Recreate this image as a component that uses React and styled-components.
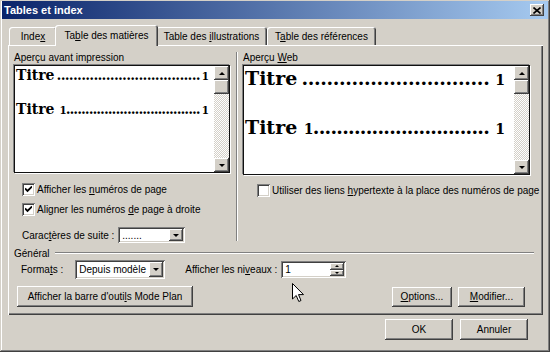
import React from 'react';
import styled, { createGlobalStyle } from 'styled-components';

const GlobalStyle = createGlobalStyle`
  html, body {
    margin: 0;
    padding: 0;
    background: #d4d0c8;
  }
  body {
    font-family: "Liberation Sans", Arial, sans-serif;
    font-size: 10px;
    color: #000;
  }
  * {
    box-sizing: border-box;
  }
`;

// classic 3D bevels
const raised = `
  background: #d4d0c8;
  box-shadow: inset -1px -1px #404040, inset 1px 1px #fff,
    inset -2px -2px #808080, inset 2px 2px #d4d0c8;
`;

const sunken = `
  background: #fff;
  box-shadow: inset 1px 1px #808080, inset -1px -1px #fff,
    inset 2px 2px #404040, inset -2px -2px #d4d0c8;
`;

const Window = styled.div`
  position: relative;
  width: 550px;
  height: 352px;
  padding: 1px 2px 2px 2px;
  background: #d4d0c8;
  box-shadow: inset -1px -1px #404040, inset 1px 1px #d4d0c8,
    inset -2px -2px #808080, inset 2px 2px #fff;
  display: flex;
  flex-direction: column;
  overflow: hidden;
`;

const TitleBar = styled.div`
  height: 18px;
  display: flex;
  align-items: center;
  justify-content: space-between;
  padding: 0 4px 0 2px;
  background: linear-gradient(to right, #0a246a, #a6caf0);
  color: #fff;
  font-weight: bold;
  font-size: 11px;
`;

const CloseButton = styled.div`
  ${raised}
  width: 14px;
  height: 12px;
  display: flex;
  align-items: center;
  justify-content: center;
`;

const Body = styled.div`
  flex: 1;
  display: flex;
  flex-direction: column;
  padding: 6px 5px 0 6px;
`;

const TabRow = styled.div`
  display: flex;
  align-items: flex-end;
  height: 20px;
  padding-left: 1px;
`;

const Tab = styled.div`
  position: relative;
  z-index: ${p => (p.$active ? 1 : 0)};
  width: ${p => p.$w}px;
  height: ${p => (p.$active ? 21 : 18)}px;
  margin: 0 ${p => (p.$active ? -2 : 0)}px ${p => (p.$active ? -1 : 0)}px;
  display: flex;
  align-items: center;
  justify-content: center;
  padding-top: ${p => (p.$active ? 0 : 1)}px;
  background: #d4d0c8;
  border-radius: 3px 3px 0 0;
  box-shadow: inset 1px 1px #fff, inset -1px 0 #404040, inset -2px 0 #808080;
  white-space: nowrap;
`;

const Panel = styled.div`
  height: 270px;
  padding: 7px 12px 0 6px;
  box-shadow: inset 1px 1px #fff, inset -1px -1px #404040, inset -2px -2px #808080;
  display: flex;
  flex-direction: column;
`;

const TopSection = styled.div`
  display: flex;
  height: 191px;
`;

const Column = styled.div`
  width: ${p => p.$w}px;
  display: flex;
  flex-direction: column;
`;

const Separator = styled.div`
  width: 2px;
  margin: 0 5px 2px 6px;
  border-left: 1px solid #808080;
  border-right: 1px solid #fff;
`;

const GroupLabel = styled.div`
  height: 12px;
  line-height: 12px;
  margin-bottom: 1px;
  white-space: nowrap;
`;

const PreviewFrame = styled.div`
  height: 110px;
  display: flex;
  background: #fff;
  border: 1px solid #111;
  box-shadow: -1px -1px 0 #808080, 1px 1px 0 #fff;
`;

const PreviewContent = styled.div`
  flex: 1;
  min-width: 0;
  display: flex;
  flex-direction: column;
  gap: ${p => p.$gap}px;
  padding: ${p => p.$pt}px ${p => p.$pr}px 0 1px;
`;

const TocLine = styled.div`
  display: flex;
  align-items: baseline;
  font-family: "DejaVu Serif", Georgia, serif;
  font-weight: bold;
  font-size: ${p => p.$size}px;
  line-height: ${p => p.$lh}px;
  white-space: nowrap;
`;

const Leader = styled.span`
  flex: 1;
  display: flex;
  justify-content: space-between;
  margin: 0 ${p => p.$mr}px 0 ${p => p.$ml}px;
`;

const Dot = styled.span`
  width: 3px;
  display: inline-flex;
  justify-content: center;
`;

const Num = styled.span`
  font-size: 0.74em;
`;

const ScrollBar = styled.div`
  width: 15px;
  display: flex;
  flex-direction: column;
  background: repeating-conic-gradient(#d4d0c8 0 25%, #fff 0 50%) 0 0 / 2px 2px;
`;

const ScrollButton = styled.div`
  ${raised}
  height: ${p => p.$h || 14}px;
  display: flex;
  align-items: center;
  justify-content: center;
`;

const Track = styled.div`
  flex: 1;
`;

const Arrow = styled.span`
  width: 0;
  height: 0;
  border-left: ${p => p.$s}px solid transparent;
  border-right: ${p => p.$s}px solid transparent;
  ${p => (p.$up ? 'border-bottom' : 'border-top')}: ${p => p.$s}px solid #000;
`;

const CheckRow = styled.div`
  display: flex;
  align-items: center;
  gap: 2px;
  height: 13px;
  margin-top: ${p => p.$mt}px;
  padding-left: ${p => p.$pl}px;
  white-space: nowrap;
`;

const CheckBox = styled.span`
  ${sunken}
  width: 13px;
  height: 13px;
  flex: none;
  display: flex;
  align-items: center;
  justify-content: center;
`;

const FieldRow = styled.div`
  display: flex;
  align-items: center;
  height: ${p => p.$h}px;
  margin-top: ${p => p.$mt || 0}px;
  padding-left: ${p => p.$pl || 0}px;
  white-space: nowrap;
`;

const FieldLabel = styled.span`
  margin: 0 ${p => p.$mr || 0}px 0 ${p => p.$ml || 0}px;
`;

const Combo = styled.div`
  ${sunken}
  width: ${p => p.$w}px;
  height: ${p => p.$h}px;
  padding: 2px;
  display: flex;
`;

const ComboText = styled.div`
  flex: 1;
  display: flex;
  align-items: center;
  padding-left: 2px;
`;

const DropButton = styled.div`
  ${raised}
  width: 14px;
  display: flex;
  align-items: center;
  justify-content: center;
`;

const SpinButtons = styled.div`
  width: 14px;
  display: flex;
  flex-direction: column;
`;

const SpinButton = styled.div`
  ${raised}
  flex: 1;
  display: flex;
  align-items: center;
  justify-content: center;
`;

const GeneralHeader = styled.div`
  display: flex;
  align-items: center;
  height: 12px;
  margin-top: 4px;
  margin-right: -3px;
`;

const EtchedLine = styled.div`
  flex: 1;
  height: 2px;
  margin-left: 5px;
  border-top: 1px solid #808080;
  border-bottom: 1px solid #fff;
`;

const ButtonRow = styled.div`
  display: flex;
  align-items: center;
  gap: 6px;
  margin-top: 7px;
  padding: 0 6px 0 3px;
`;

const Spacer = styled.div`
  flex: 1;
`;

const Button = styled.button`
  ${raised}
  width: ${p => p.$w}px;
  height: ${p => p.$h || 20}px;
  border: none;
  padding: 0;
  font: inherit;
  color: #000;
  display: flex;
  align-items: center;
  justify-content: center;
  white-space: nowrap;
`;

const Footer = styled.div`
  display: flex;
  justify-content: flex-end;
  gap: 7px;
  padding: 4px 15px 0 0;
`;

const Cursor = styled.svg`
  position: absolute;
  left: 292px;
  top: 283px;
`;

const Check = () => (
  <svg width="7" height="7" viewBox="0 0 7 7">
    <path d="M0 2.5 L2.5 5 L7 0.5" fill="none" stroke="#000" strokeWidth="1.8" />
  </svg>
);

const Toc = ({ size, lh, num, dots, ml, mr }) => (
  <TocLine $size={size} $lh={lh}>
    <span>
      Titre{num && <>&nbsp;<Num>1</Num></>}
    </span>
    <Leader $ml={ml} $mr={mr}>
      {Array.from({ length: dots }, (_, i) => <Dot key={i}>.</Dot>)}
    </Leader>
    <Num>1</Num>
  </TocLine>
);

const Scroll = () => (
  <ScrollBar>
    <ScrollButton><Arrow $up $s={3} /></ScrollButton>
    <ScrollButton />
    <Track />
    <ScrollButton><Arrow $s={3} /></ScrollButton>
  </ScrollBar>
);

export default function App() {
  return (
    <>
      <GlobalStyle />
      <Window>
        <TitleBar>
          <span>Tables et index</span>
          <CloseButton>
            <svg width="8" height="7" viewBox="0 0 8 7">
              <path d="M0.5 0.5 L7.5 6.5 M7.5 0.5 L0.5 6.5" stroke="#000" strokeWidth="1.6" />
            </svg>
          </CloseButton>
        </TitleBar>
        <Body>
          <TabRow>
            <Tab $w={48}><span>Inde<u>x</u></span></Tab>
            <Tab $w={103} $active><span>Ta<u>b</u>le des matières</span></Tab>
            <Tab $w={111}><span>Table des <u>i</u>llustrations</span></Tab>
            <Tab $w={109}><span>T<u>a</u>ble des références</span></Tab>
          </TabRow>
          <Panel>
            <TopSection>
              <Column $w={216}>
                <GroupLabel>Aperçu avant impression</GroupLabel>
                <PreviewFrame>
                  <PreviewContent $gap={16} $pt={1} $pr={5}>
                    <Toc size={14} lh={17} dots={35} ml={3} mr={2} />
                    <Toc size={14} lh={17} num dots={35} ml={0} mr={2} />
                  </PreviewContent>
                  <Scroll />
                </PreviewFrame>
                <CheckRow $mt={10} $pl={8}>
                  <CheckBox><Check /></CheckBox>
                  <span>Afficher les <u>n</u>uméros de page</span>
                </CheckRow>
                <CheckRow $mt={7} $pl={8}>
                  <CheckBox><Check /></CheckBox>
                  <span>Aligner les numéros <u>d</u>e page à droite</span>
                </CheckRow>
                <FieldRow $h={16} $mt={11} $pl={8}>
                  <FieldLabel $mr={4}>Carac<u>t</u>ères de suite :</FieldLabel>
                  <Combo $w={67} $h={16}>
                    <ComboText>.......</ComboText>
                    <DropButton><Arrow $s={3} /></DropButton>
                  </Combo>
                </FieldRow>
              </Column>
              <Separator />
              <Column $w={287}>
                <GroupLabel>Aperçu <u>W</u>eb</GroupLabel>
                <PreviewFrame>
                  <PreviewContent $gap={25} $pt={1} $pr={9}>
                    <Toc size={19} lh={22} dots={30} ml={6} mr={7} />
                    <Toc size={19} lh={22} num dots={30} ml={1} mr={7} />
                  </PreviewContent>
                  <Scroll />
                </PreviewFrame>
                <CheckRow $mt={9} $pl={14}>
                  <CheckBox />
                  <span>Utiliser des liens <u>h</u>ypertexte à la place des numéros de page</span>
                </CheckRow>
              </Column>
            </TopSection>
            <GeneralHeader>
              <span>Général</span>
              <EtchedLine />
            </GeneralHeader>
            <FieldRow $h={19} $mt={1} $pl={7}>
              <FieldLabel $mr={12}>Forma<u>t</u>s :</FieldLabel>
              <Combo $w={90} $h={19}>
                <ComboText>Depuis modèle</ComboText>
                <DropButton><Arrow $s={3} /></DropButton>
              </Combo>
              <FieldLabel $ml={20} $mr={4}>
                Afficher les ni<u>v</u>eaux :
              </FieldLabel>
              <Combo $w={65} $h={17}>
                <ComboText>1</ComboText>
                <SpinButtons>
                  <SpinButton><Arrow $up $s={2} /></SpinButton>
                  <SpinButton><Arrow $s={2} /></SpinButton>
                </SpinButtons>
              </Combo>
            </FieldRow>
            <ButtonRow>
              <Button $w={176} $h={21}><span>Afficher la barre d'outi<u>l</u>s Mode Plan</span></Button>
              <Spacer />
              <Button $w={60}><span><u>O</u>ptions...</span></Button>
              <Button $w={67}><span><u>M</u>odifier...</span></Button>
            </ButtonRow>
          </Panel>
          <Footer>
            <Button $w={68} $h={21}>OK</Button>
            <Button $w={68} $h={21}>Annuler</Button>
          </Footer>
        </Body>
        <Cursor width="13" height="20" viewBox="0 0 13 20">
          <path
            d="M0.5 0.5 L0.5 16 L4.2 12.5 L6.8 18.5 L9 17.5 L6.5 11.6 L11.5 11.6 Z"
            fill="#fff"
            stroke="#000"
            strokeWidth="1"
          />
        </Cursor>
      </Window>
    </>
  );
}
